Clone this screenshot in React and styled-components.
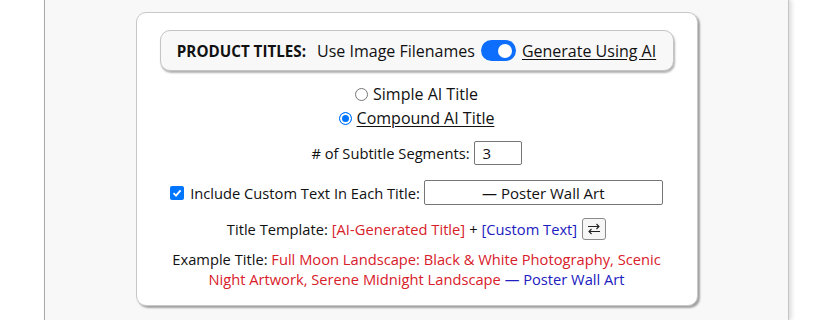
import styled, { createGlobalStyle } from 'styled-components';

const GlobalStyle = createGlobalStyle`
	body {
		margin: 0;
		background: #fff;
		font-family: "Open Sans", "Noto Sans", sans-serif;
		color: #111;
	}
`;

const Page = styled.div`
	display: flex;
	height: 320px;
	overflow: hidden;
`;

const Gutter = styled.div`
	width: 44px;
	flex-shrink: 0;
`;

const Panel = styled.div`
	width: 743px;
	flex-shrink: 0;
	background: #f8f8f8;
	border-left: 1px solid #a8a8a8;
	border-right: 1px solid #c4c4c4;
	box-shadow: 3px 0 4px rgba(0, 0, 0, 0.12);
	display: flex;
	justify-content: center;
	padding-top: 12px;
`;

const Card = styled.div`
	width: 562px;
	height: 294px;
	box-sizing: border-box;
	background: #fff;
	border: 1px solid #c8c8c8;
	border-radius: 10px;
	box-shadow: 2px 2px 2px rgba(0, 0, 0, 0.35);
	padding: 17px 0 0;
	display: flex;
	flex-direction: column;
	align-items: center;
	font-size: 14.7px;
`;

const Pill = styled.div`
	width: 514px;
	height: 41px;
	box-sizing: border-box;
	display: flex;
	align-items: center;
	justify-content: center;
	gap: 6px;
	background: #f8f8f8;
	border: 1px solid #c4c4c4;
	border-radius: 10px;
	box-shadow: 1px 2px 2px rgba(0, 0, 0, 0.3);
	font-size: 16px;
`;

const Bold = styled.span`
	font-weight: 700;
	font-size: 15.2px;
	margin-right: 5px;
`;

const Toggle = styled.span`
	position: relative;
	display: inline-block;
	width: 35px;
	height: 21px;
	border-radius: 11px;
	background: #0d6efd;

	&::after {
		content: '';
		position: absolute;
		top: 3.5px;
		right: 4px;
		width: 14px;
		height: 14px;
		border-radius: 50%;
		background: #fff;
	}
`;

const Under = styled.span`
	text-decoration: underline;
	text-underline-offset: 2px;
`;

const Choices = styled.div`
	margin-top: 11px;
	display: flex;
	flex-direction: column;
	align-items: center;
`;

const Choice = styled.label`
	display: flex;
	align-items: center;
	gap: 5px;
	height: 24px;
	font-size: 16px;
`;

const Radio = styled.span`
	width: 13px;
	height: 13px;
	box-sizing: border-box;
	border-radius: 50%;
	border: 1px solid ${p => (p.$on ? '#0075ff' : '#767676')};
	background: ${p => (p.$on ? '#0075ff' : '#fff')};
	box-shadow: ${p => (p.$on ? 'inset 0 0 0 2px #fff' : 'none')};
`;

const Row = styled.div`
	display: flex;
	align-items: center;
	justify-content: center;
	gap: 4px;
	margin-top: ${p => p.$top}px;
`;

const Field = styled.span`
	display: inline-flex;
	align-items: center;
	justify-content: ${p => (p.$center ? 'center' : 'flex-start')};
	width: ${p => p.$w}px;
	height: ${p => p.$h}px;
	box-sizing: border-box;
	padding-left: ${p => (p.$center ? 0 : 8)}px;
	border: 1px solid #767676;
	border-radius: 2px;
	background: #fff;
	font-size: 15px;
`;

const Check = styled.span`
	display: inline-flex;
	align-items: center;
	justify-content: center;
	width: 14px;
	height: 14px;
	border-radius: 2px;
	background: #0075ff;
	margin-right: 2px;
`;

const Red = styled.span`
	color: #d8202a;
`;

const Blue = styled.span`
	color: #2020c0;
`;

const SwapButton = styled.span`
	display: inline-flex;
	align-items: center;
	justify-content: center;
	width: 24px;
	height: 22px;
	box-sizing: border-box;
	border: 1px solid #8a8a8a;
	border-radius: 3px;
	background: #f6f6f6;
	margin-left: 1px;
`;

const Example = styled.div`
	margin-top: 9px;
	width: 500px;
	text-align: center;
	line-height: 20px;
`;

const App = () => {
	return (
		<>
			<GlobalStyle />
			<Page>
				<Gutter />
				<Panel>
					<Card>
						<Pill>
							<Bold>PRODUCT TITLES:</Bold>
							<span>Use Image Filenames</span>
							<Toggle />
							<Under>Generate Using AI</Under>
						</Pill>
						<Choices>
							<Choice>
								<Radio />
								Simple AI Title
							</Choice>
							<Choice>
								<Radio $on />
								<Under>Compound AI Title</Under>
							</Choice>
						</Choices>
						<Row $top={11}>
							# of Subtitle Segments:
							<Field $w={48} $h={24}>3</Field>
						</Row>
						<Row $top={15}>
							<Check>
								<svg width="10" height="10" viewBox="0 0 10 10">
									<path d="M1.5 5.2 L4 7.6 L8.6 2.4" fill="none" stroke="#fff" strokeWidth="1.8" />
								</svg>
							</Check>
							Include Custom Text In Each Title:
							<Field $w={239} $h={25} $center>— Poster Wall Art</Field>
						</Row>
						<Row $top={13}>
							Title Template: <Red>[AI-Generated Title]</Red> + <Blue>[Custom Text]</Blue>
							<SwapButton>
								<svg width="14" height="12" viewBox="0 0 14 12">
									<path d="M1 3.5 H12 M9.5 1 L12 3.5 L9.5 6 M13 8.5 H2 M4.5 6 L2 8.5 L4.5 11" fill="none" stroke="#222" strokeWidth="1.1" />
								</svg>
							</SwapButton>
						</Row>
						<Example>
							Example Title: <Red>Full Moon Landscape: Black &amp; White Photography, Scenic Night Artwork, Serene Midnight Landscape</Red> <Blue>— Poster Wall Art</Blue>
						</Example>
					</Card>
				</Panel>
			</Page>
		</>
	);
};

export default App;
